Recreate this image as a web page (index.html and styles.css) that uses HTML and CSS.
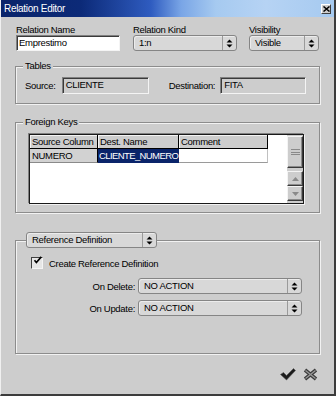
FILE: index.html
```html
<!DOCTYPE html>
<html lang="en">
<head>
    <meta charset="UTF-8">
    <title>Relation Editor</title>
    <link rel="stylesheet" href="styles.css">
</head>
<body>

<div class="window">
    <div class="titlebar">
        <span class="title">Relation Editor</span>
        <span class="close-btn">
            <svg width="7" height="6" viewBox="0 0 7 6"><path d="M0.5 0.5 L6.5 5.5 M6.5 0.5 L0.5 5.5" stroke="#000" stroke-width="1.5"/></svg>
        </span>
    </div>

    <div class="content">
        <!-- name / kind / visibility -->
        <div class="top-row">
            <div class="field field-name">
                <div class="label">Relation Name</div>
                <div class="edit">Emprestimo</div>
            </div>
            <div class="field field-kind">
                <div class="label">Relation Kind</div>
                <div class="combo">
                    <span class="combo-text">1:n</span>
                    <span class="spin"><svg width="7" height="9" viewBox="0 0 7 9"><path d="M3.5 0.5 L6.5 3.5 H0.5 Z M0.5 5.5 H6.5 L3.5 8.5 Z" fill="#000"/></svg></span>
                </div>
            </div>
            <div class="field field-vis">
                <div class="label">Visibility</div>
                <div class="combo">
                    <span class="combo-text">Visible</span>
                    <span class="spin"><svg width="7" height="9" viewBox="0 0 7 9"><path d="M3.5 0.5 L6.5 3.5 H0.5 Z M0.5 5.5 H6.5 L3.5 8.5 Z" fill="#000"/></svg></span>
                </div>
            </div>
        </div>

        <!-- Tables -->
        <div class="group group-tables">
            <span class="group-title">Tables</span>
            <span class="inline-label">Source:</span>
            <div class="edit readonly src-edit">CLIENTE</div>
            <span class="inline-label dest-label">Destination:</span>
            <div class="edit readonly dest-edit">FITA</div>
        </div>

        <!-- Foreign Keys -->
        <div class="group group-keys">
            <span class="group-title">Foreign Keys</span>
            <div class="grid">
                <div class="grid-table">
                    <div class="grid-row grid-head">
                        <div class="cell c1">Source Column</div>
                        <div class="cell c2">Dest. Name</div>
                        <div class="cell c3">Comment</div>
                    </div>
                    <div class="grid-row">
                        <div class="cell c1 fixed">NUMERO</div>
                        <div class="cell c2 selected">CLIENTE_NUMERO</div>
                        <div class="cell c3 blank"></div>
                    </div>
                </div>
                <div class="scrollbar">
                    <div class="sb-thumb"><span class="grip"></span></div>
                    <div class="sb-btn sb-up"><svg width="7" height="4" viewBox="0 0 7 4"><path d="M3.5 0 L7 4 H0 Z" fill="#8a8a8a"/></svg></div>
                    <div class="sb-btn"><svg width="7" height="4" viewBox="0 0 7 4"><path d="M0 0 H7 L3.5 4 Z" fill="#8a8a8a"/></svg></div>
                </div>
            </div>
        </div>

        <!-- Reference Definition -->
        <div class="group group-ref">
            <div class="combo group-combo">
                <span class="combo-text">Reference Definition</span>
                <span class="spin"><svg width="7" height="9" viewBox="0 0 7 9"><path d="M3.5 0.5 L6.5 3.5 H0.5 Z M0.5 5.5 H6.5 L3.5 8.5 Z" fill="#000"/></svg></span>
            </div>
            <div class="check-row">
                <span class="checkbox">
                    <svg width="12" height="12" viewBox="0 0 12 12"><path d="M2 5 L4.5 8 L11 0.5" fill="none" stroke="#000" stroke-width="2.2"/></svg>
                </span>
                <span>Create Reference Definition</span>
            </div>
            <div class="action-row">
                <span class="action-label">On Delete:</span>
                <div class="combo action-combo">
                    <span class="combo-text">NO ACTION</span>
                    <span class="spin"><svg width="7" height="9" viewBox="0 0 7 9"><path d="M3.5 0.5 L6.5 3.5 H0.5 Z M0.5 5.5 H6.5 L3.5 8.5 Z" fill="#000"/></svg></span>
                </div>
            </div>
            <div class="action-row">
                <span class="action-label">On Update:</span>
                <div class="combo action-combo">
                    <span class="combo-text">NO ACTION</span>
                    <span class="spin"><svg width="7" height="9" viewBox="0 0 7 9"><path d="M3.5 0.5 L6.5 3.5 H0.5 Z M0.5 5.5 H6.5 L3.5 8.5 Z" fill="#000"/></svg></span>
                </div>
            </div>
        </div>

        <!-- OK / Cancel -->
        <div class="buttons">
            <span class="icon-btn">
                <svg width="16" height="13" viewBox="0 0 16 13"><path d="M0.5 6.5 L3.5 4.5 L6.5 7.5 L13.5 0.5 L15.5 2.5 L6.5 12 Z" fill="#1c1c1c" stroke="#555" stroke-width="0.6"/></svg>
            </span>
            <span class="icon-btn">
                <svg width="15" height="13" viewBox="0 0 15 13"><path d="M2 2 L13 11 M13 2 L2 11" stroke="#3a3a3a" stroke-width="3.6"/><path d="M2.5 2.5 L12.5 10.5 M12.5 2.5 L2.5 10.5" stroke="#9a9a9a" stroke-width="1.3"/></svg>
            </span>
        </div>
    </div>
</div>

</body>
</html>
```

FILE: styles.css
```css
* {
    box-sizing: border-box;
}
body {
    margin: 0;
    background: #cdcdcd;
    font-family: "Liberation Sans", Arial, sans-serif;
    font-size: 9.5px;
    letter-spacing: -0.3px;
    color: #000;
}
.window {
    width: 336px;
    height: 396px;
    background: #cdcdcd;
    border-left: 1px solid #f0f0f0;
    border-right: 2px solid #3c3c3c;
    border-bottom: 2px solid #3c3c3c;
}
.titlebar {
    height: 17px;
    display: flex;
    align-items: center;
    justify-content: space-between;
    padding: 0 3px 0 3px;
    color: #fff;
    font-size: 10px;
    background: linear-gradient(90deg, #0a246a 0, #0c2a78 80px, #2f5cc0 150px, #79a5e6 180px, #a6caf0 215px, #b6d3f4 265px, #a6caf0 100%);
}
.close-btn {
    width: 10px;
    height: 10px;
    display: flex;
    align-items: center;
    justify-content: center;
    background: #cdcdcd;
    border: 1px solid;
    border-color: #fff #404040 #404040 #fff;
}

.content {
    padding: 7px 14px 0 14px;
}
.top-row {
    display: flex;
    gap: 13px;
    margin-left: 1px;
}
.field-vis {
    margin-left: -1px;
}
.label {
    line-height: 11px;
    height: 11px;
}
.edit {
    height: 16px;
    line-height: 13px;
    padding-left: 2px;
    background: #fff;
    border: 1px solid;
    border-color: #808080 #f4f4f4 #f4f4f4 #808080;
    box-shadow: inset 1px 1px #3a3a3a;
    white-space: nowrap;
}
.field-name .edit {
    width: 104px;
}
.field-kind .combo {
    width: 104px;
}
.field-vis .combo {
    width: 70px;
}
.combo {
    height: 16px;
    display: flex;
    align-items: stretch;
    background: #d8d8d8;
    border: 1px solid #858585;
    border-radius: 3px;
    box-shadow: inset 1px 1px #ececec;
}
.combo-text {
    flex: 1;
    padding-left: 5px;
    line-height: 14px;
    white-space: nowrap;
}
.spin {
    width: 14px;
    display: flex;
    align-items: center;
    justify-content: center;
    border-left: 1px solid #9a9a9a;
}

.group {
    position: relative;
    border: 1px solid #8c8c8c;
    box-shadow: inset 1px 1px #f2f2f2, 1px 1px #f2f2f2;
}
.group-title {
    position: absolute;
    top: -7px;
    left: 7px;
    padding: 0 2px;
    line-height: 12px;
    background: #cdcdcd;
}
.group-tables {
    margin-top: 15px;
    height: 38px;
    display: flex;
    align-items: center;
    padding-left: 9px;
}
.inline-label {
    margin-right: 6px;
}
.readonly {
    background: #cdcdcd;
    height: 17px;
    line-height: 14px;
    padding-left: 3px;
}
.src-edit {
    width: 87px;
}
.dest-label {
    margin-left: 20px;
    margin-right: 5px;
}
.dest-edit {
    width: 86px;
}

.group-keys {
    margin-top: 18px;
    height: 91px;
    padding: 11px 0 0 13px;
}
.grid {
    width: 275px;
    height: 70px;
    display: flex;
    border: 1px solid #1a1a1a;
    box-shadow: -1px -1px #808080, 1px 1px #f2f2f2;
}
.grid-table {
    flex: 1;
    background: #fff;
}
.grid-row {
    display: flex;
    height: 14px;
}
.cell {
    line-height: 13px;
    padding-left: 2px;
    border-right: 1px solid #000;
    white-space: nowrap;
    overflow: hidden;
}
.c1 {
    width: 68px;
}
.c2 {
    width: 81px;
}
.c3 {
    width: 89px;
}
.grid-head .cell {
    background: #cdcdcd;
    border-bottom: 1px solid #000;
    box-shadow: inset 1px 1px #f4f4f4;
}
.fixed {
    background: #d2d2d2;
    border-bottom: 1px solid #8a8a8a;
}
.selected {
    background: #0a246a;
    color: #fff;
    padding-left: 1px;
    letter-spacing: -0.6px;
    border-right: none;
    border-bottom: 1px solid #0a246a;
}
.blank {
    border-bottom: 1px solid #9a9a9a;
    border-right: 1px solid #c0c0c0;
}
.scrollbar {
    width: 16px;
    background: #cdcdcd;
    padding-top: 1px;
    display: flex;
    flex-direction: column;
}
.sb-thumb,
.sb-btn {
    border: 1px solid;
    border-color: #f4f4f4 #3a3a3a #3a3a3a #f4f4f4;
    box-shadow: inset -1px -1px #8a8a8a;
    background: #cdcdcd;
    display: flex;
    align-items: center;
    justify-content: center;
}
.sb-thumb {
    height: 32px;
}
.grip {
    width: 9px;
    height: 6px;
    border-top: 1px solid #8a8a8a;
    border-bottom: 1px solid #8a8a8a;
    background: linear-gradient(#cdcdcd 2px, #8a8a8a 2px, #8a8a8a 3px, #cdcdcd 3px);
}
.sb-up {
    margin-top: 3px;
}
.sb-btn {
    height: 15px;
}

.group-ref {
    margin-top: 27px;
    height: 114px;
    padding: 16px 0 0 15px;
}
.group-combo {
    position: absolute;
    top: -9px;
    left: 10px;
    width: 131px;
}
.check-row {
    display: flex;
    align-items: center;
    gap: 6px;
    height: 12px;
}
.checkbox {
    width: 12px;
    height: 12px;
    background: #e6e6e6;
    border: 1px solid;
    border-color: #404040 #f4f4f4 #f4f4f4 #404040;
    display: flex;
    align-items: flex-start;
    justify-content: center;
}
.checkbox svg {
    margin-top: -3px;
    margin-left: 1px;
}
.action-row {
    display: flex;
    align-items: center;
    margin-top: 6px;
}
.check-row + .action-row {
    margin-top: 9px;
}
.action-label {
    width: 104px;
    text-align: right;
    margin-right: 3px;
}
.action-combo {
    width: 164px;
}

.buttons {
    display: flex;
    justify-content: flex-end;
    gap: 7px;
    margin-top: 14px;
    padding-right: 2px;
}
.icon-btn {
    display: flex;
}
```
